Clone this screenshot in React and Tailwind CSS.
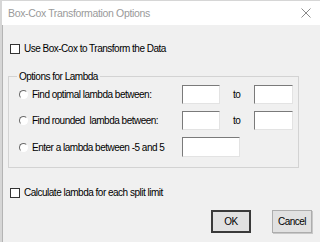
export default function App() {
  return (
    <div className="flex h-[242px] w-[320px] flex-col overflow-hidden border-l-2 border-t border-[#d6d6d6] bg-[#f0f0f0] font-['Liberation_Sans',Arial,sans-serif] text-[10px] leading-[13px] tracking-[-0.5px] text-black">
      <div className="flex h-[24px] shrink-0 items-center justify-between bg-white pl-[6px] pr-[8px]">
        <span className="text-[10.5px] tracking-[-0.35px] text-[#9a9a9a]">Box-Cox Transformation Options</span>
        <svg width="10" height="10" viewBox="0 0 10 10" className="mr-[1px]">
          <path d="M0.5 0.5 L9.5 9.5 M9.5 0.5 L0.5 9.5" stroke="#8a8a8a" strokeWidth="1" fill="none" />
        </svg>
      </div>

      <div className="flex flex-1 flex-col border-l border-[#b4b4b4]">
        <label className="ml-[7px] mt-[17px] flex h-[13px] items-center gap-[4px]">
          <span className="h-[10px] w-[10px] border border-[#333] bg-white" />
          <span>Use Box-Cox to Transform the Data</span>
        </label>

        <fieldset className="ml-[5px] mt-[15px] w-[291px] border border-[#d3d3d3] pb-[10px] pl-[10px]">
          <legend className="-ml-[2px] px-[2px] leading-[13px]">Options for Lambda</legend>
          <div className="mt-[2px] flex flex-col gap-[7px]">
            {[
              'Find optimal lambda between:',
              'Find rounded\u00a0 lambda between:'
            ].map((label) => (
              <div key={label} className="flex h-[19px] items-center">
                <div className="flex w-[163px] items-center gap-[4px]">
                  <Radio />
                  <span className="whitespace-nowrap">{label}</span>
                </div>
                <TextBox width="w-[38px]" />
                <span className="w-[34px] pl-[13px]">to</span>
                <TextBox width="w-[39px]" />
              </div>
            ))}
            <div className="flex h-[20px] items-center">
              <div className="flex w-[163px] items-center gap-[4px]">
                <Radio />
                <span className="whitespace-nowrap">Enter a lambda between -5 and 5</span>
              </div>
              <TextBox width="w-[58px]" />
            </div>
          </div>
        </fieldset>

        <label className="ml-[7px] mt-[18px] flex h-[13px] items-center gap-[4px]">
          <span className="h-[10px] w-[10px] border border-[#333] bg-white" />
          <span>Calculate lambda for each split limit</span>
        </label>

        <div className="mr-[8px] mt-[11px] flex justify-end gap-[21px]">
          <button
            type="button"
            className="h-[23px] w-[40px] border-2 border-[#3a3a3a] bg-[#e1e1e1]"
          >
            OK
          </button>
          <button
            type="button"
            className="h-[23px] w-[40px] border border-[#adadad] bg-[#e1e1e1] shadow-[1px_1px_0_#c8c8c8]"
          >
            Cancel
          </button>
        </div>
      </div>
    </div>
  );
}

function Radio() {
  return (
    <span className="h-[9px] w-[9px] shrink-0 rounded-full border border-b-white border-l-[#6a6a6a] border-r-white border-t-[#6a6a6a] bg-white" />
  );
}

function TextBox({ width }) {
  return (
    <span
      className={`h-full ${width} border border-b-[#e3e3e3] border-l-[#7a7a7a] border-r-[#e3e3e3] border-t-[#7a7a7a] bg-white`}
    />
  );
}
